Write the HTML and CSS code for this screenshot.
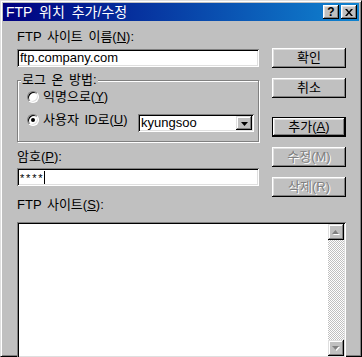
FILE: index.html
```html
<!DOCTYPE html>
<html lang="ko">
<head>
    <meta charset="UTF-8">
    <title>FTP 위치 추가/수정</title>
    <link rel="stylesheet" href="styles.css">
</head>
<body>
    <div class="window">
        <div class="titlebar">
            <span class="title">FTP 위치 추가/수정</span>
            <div class="title-buttons">
                <span class="tbtn help">?</span>
                <span class="tbtn close">
                    <svg width="8" height="7" viewBox="0 0 8 7"><path d="M0 0h2l2 2.5L6 0h2L5 3.5 8 7H6L4 4.5 2 7H0l3-3.5z" fill="#000"/></svg>
                </span>
            </div>
        </div>
        <div class="content">
            <div class="top">
                <div class="form">
                    <div class="label first">FTP 사이트 이름(<u>N</u>):</div>
                    <div class="field">ftp.company.com</div>
                    <div class="group">
                        <span class="group-title">로그 온 방법:</span>
                        <div class="radio-row">
                            <span class="radio"></span>
                            <span>익명으로(<u>Y</u>)</span>
                        </div>
                        <div class="radio-row user">
                            <span class="radio checked"></span>
                            <span>사용자 ID로(<u>U</u>)</span>
                            <div class="combo">
                                <span class="combo-text">kyungsoo</span>
                                <span class="combo-btn">
                                    <svg width="7" height="4" viewBox="0 0 7 4"><path d="M0 0h7L3.5 4z" fill="#000"/></svg>
                                </span>
                            </div>
                        </div>
                    </div>
                    <div class="label pass-label">암호(<u>P</u>):</div>
                    <div class="field password"><span class="stars">****</span><span class="caret"></span></div>
                </div>
                <div class="buttons">
                    <div class="btn ok">확인</div>
                    <div class="btn">취소</div>
                    <div class="btn default">추가(<u>A</u>)</div>
                    <div class="btn disabled">수정(M)</div>
                    <div class="btn disabled">삭제(R)</div>
                </div>
            </div>
            <div class="label list-label">FTP 사이트(<u>S</u>):</div>
            <div class="listbox">
                <div class="list-area"></div>
                <div class="scrollbar">
                    <span class="sbtn">
                        <svg width="8" height="5" viewBox="0 0 8 5"><path d="M1 5h7L4.5 1z" fill="#fff"/><path d="M0 4h7L3.5 0z" fill="#808080"/></svg>
                    </span>
                    <span class="track"></span>
                    <span class="sbtn">
                        <svg width="8" height="5" viewBox="0 0 8 5"><path d="M1 1h7L4.5 5z" fill="#fff"/><path d="M0 0h7L3.5 4z" fill="#808080"/></svg>
                    </span>
                </div>
            </div>
        </div>
    </div>
</body>
</html>
```

FILE: styles.css
```css
body {
    margin: 0;
    font-family: "Liberation Sans", "Noto Sans CJK KR", sans-serif;
    font-size: 13px;
    line-height: 14px;
    word-spacing: 2px;
    color: #000;
}
u {
    text-decoration: underline;
    text-underline-offset: 1px;
}
.window {
    width: 362px;
    height: 357px;
    box-sizing: border-box;
    background: #c0c0c0;
    border: 1px solid;
    border-color: #dfdfdf #000 #000 #dfdfdf;
    box-shadow: inset 1px 1px #fff, inset -1px -1px #808080;
    padding: 2px;
}
.titlebar {
    height: 18px;
    display: flex;
    align-items: center;
    justify-content: space-between;
    background: linear-gradient(90deg, #000080, #1084d0);
    color: #fff;
    padding: 0 2px 0 3px;
}
.title {
    font-size: 14px;
    word-spacing: 3px;
}
.title-buttons {
    display: flex;
    gap: 2px;
}
.tbtn {
    width: 16px;
    height: 14px;
    box-sizing: border-box;
    background: #c0c0c0;
    box-shadow: inset -1px -1px #000, inset 1px 1px #fff, inset -2px -2px #808080, inset 2px 2px #dfdfdf;
    display: flex;
    align-items: center;
    justify-content: center;
    color: #000;
    font-weight: bold;
    font-size: 12px;
    line-height: 12px;
}
.content {
    padding: 9px 13px 0 14px;
}
.top {
    display: flex;
    gap: 13px;
}
.form {
    width: 242px;
}
.field {
    height: 18px;
    box-sizing: border-box;
    margin-top: 5px;
    background: #fff;
    box-shadow: inset 1px 1px #808080, inset -1px -1px #fff, inset 2px 2px #000, inset -2px -2px #dfdfdf;
    padding: 2px 3px;
    white-space: nowrap;
}
.password {
    display: flex;
    align-items: center;
}
.stars {
    font-size: 11px;
    letter-spacing: 1.8px;
    margin-top: 2px;
}
.caret {
    width: 1px;
    height: 13px;
    background: #000;
}
.group {
    position: relative;
    margin-top: 13px;
    border: 1px solid #808080;
    box-shadow: inset 1px 1px #fff, 1px 1px #fff;
    padding: 9px 4px 9px 9px;
}
.group-title {
    position: absolute;
    top: -8px;
    left: 3px;
    background: #c0c0c0;
    padding: 0 1px;
}
.radio-row {
    display: flex;
    align-items: center;
    gap: 4px;
}
.radio-row.user {
    margin-top: 9px;
    align-items: flex-start;
}
.radio {
    width: 12px;
    height: 12px;
    box-sizing: border-box;
    border-radius: 50%;
    border: 1px solid;
    border-color: #808080 #fff #fff #808080;
    background: #fff;
    box-shadow: inset 1px 1px #000, inset -1px -1px #dfdfdf;
    display: flex;
    align-items: center;
    justify-content: center;
}
.user .radio {
    margin-top: 1px;
}
.radio.checked::after {
    content: "";
    width: 4px;
    height: 4px;
    border-radius: 50%;
    background: #000;
}
.combo {
    margin-left: auto;
    margin-top: 1px;
    width: 116px;
    height: 18px;
    box-sizing: border-box;
    background: #fff;
    box-shadow: inset 1px 1px #808080, inset -1px -1px #fff, inset 2px 2px #000, inset -2px -2px #dfdfdf;
    padding: 2px;
    display: flex;
    justify-content: space-between;
}
.combo-text {
    padding-left: 1px;
}
.combo-btn {
    width: 16px;
    height: 14px;
    box-sizing: border-box;
    background: #c0c0c0;
    box-shadow: inset -1px -1px #000, inset 1px 1px #dfdfdf, inset -2px -2px #808080, inset 2px 2px #fff;
    display: flex;
    align-items: center;
    justify-content: center;
    padding-top: 1px;
}
.pass-label {
    margin-top: 8px;
}
.field.password {
    margin-top: 4px;
}
.buttons {
    width: 74px;
    display: flex;
    flex-direction: column;
    padding-top: 8px;
}
.btn {
    height: 20px;
    box-sizing: border-box;
    margin-top: 10px;
    box-shadow: inset -1px -1px #000, inset 1px 1px #fff, inset -2px -2px #808080, inset 2px 2px #dfdfdf;
    display: flex;
    align-items: center;
    justify-content: center;
}
.btn.default {
    margin-top: 19px;
    border: 1px solid #000;
}
.btn.disabled {
    color: #808080;
    text-shadow: 1px 1px #fff;
}
.list-label {
    margin-top: 1px;
}
.listbox {
    margin-top: 10px;
    width: 329px;
    height: 136px;
    box-sizing: border-box;
    background: #fff;
    box-shadow: inset 1px 1px #808080, inset -1px -1px #fff, inset 2px 2px #000, inset -2px -2px #dfdfdf;
    padding: 2px;
    display: flex;
}
.list-area {
    flex: 1;
}
.scrollbar {
    width: 16px;
    display: flex;
    flex-direction: column;
}
.sbtn {
    height: 16px;
    background: #c0c0c0;
    box-shadow: inset -1px -1px #000, inset 1px 1px #dfdfdf, inset -2px -2px #808080, inset 2px 2px #fff;
    display: flex;
    align-items: center;
    justify-content: center;
}
.track {
    flex: 1;
    background-image: conic-gradient(#fff 25%, #c0c0c0 0 50%, #fff 0 75%, #c0c0c0 0);
    background-size: 2px 2px;
}
```
